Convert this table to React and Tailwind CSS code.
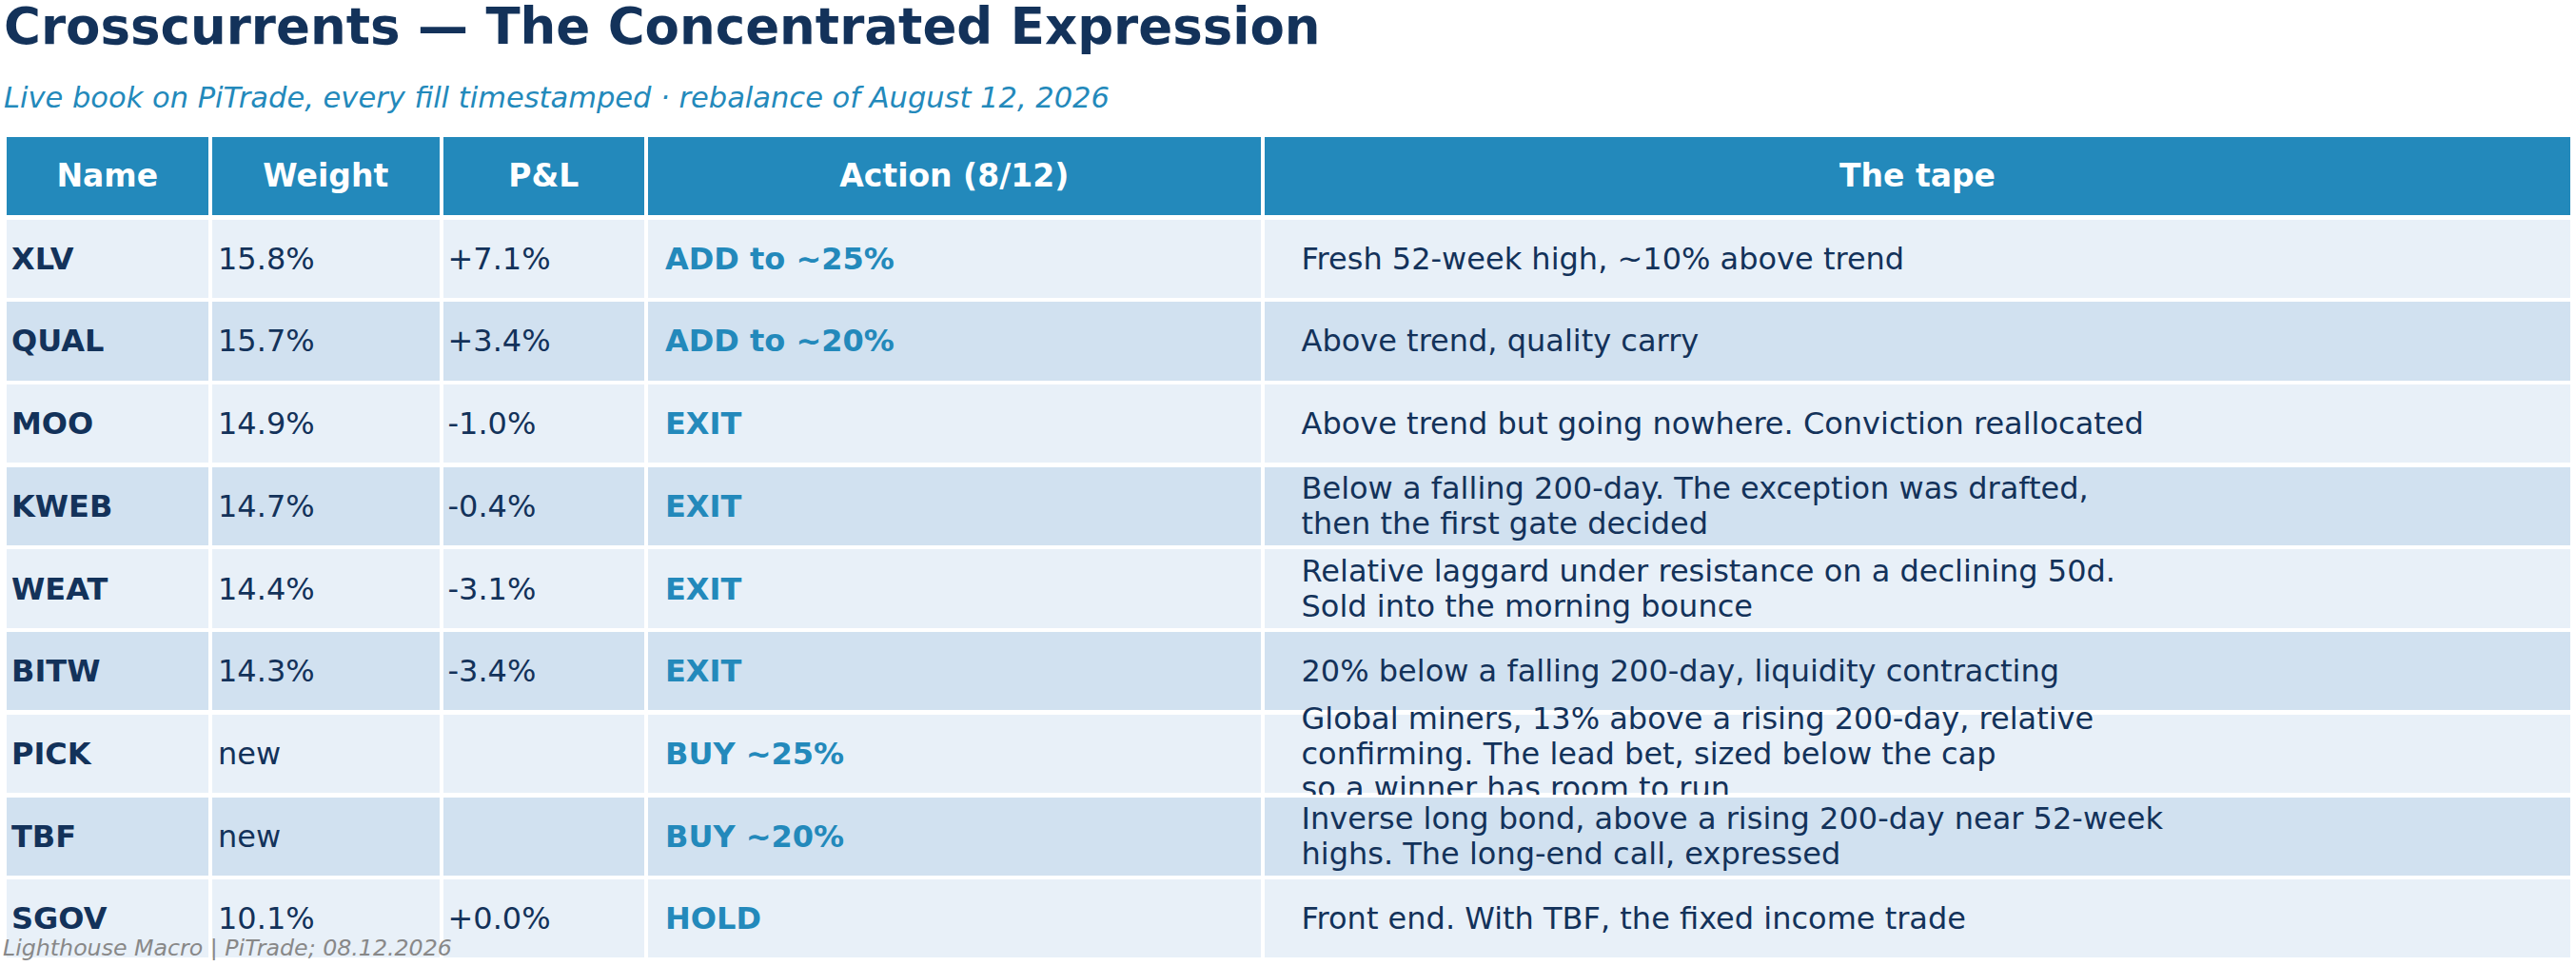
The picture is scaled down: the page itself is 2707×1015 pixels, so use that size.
import React from "react";

const rows = [
  { name: "XLV", weight: "15.8%", pnl: "+7.1%", action: "ADD to ~25%", tape: ["Fresh 52-week high, ~10% above trend"] },
  { name: "QUAL", weight: "15.7%", pnl: "+3.4%", action: "ADD to ~20%", tape: ["Above trend, quality carry"] },
  { name: "MOO", weight: "14.9%", pnl: "-1.0%", action: "EXIT", tape: ["Above trend but going nowhere. Conviction reallocated"] },
  {
    name: "KWEB",
    weight: "14.7%",
    pnl: "-0.4%",
    action: "EXIT",
    tape: ["Below a falling 200-day. The exception was drafted,", "then the first gate decided"],
  },
  {
    name: "WEAT",
    weight: "14.4%",
    pnl: "-3.1%",
    action: "EXIT",
    tape: ["Relative laggard under resistance on a declining 50d.", "Sold into the morning bounce"],
  },
  { name: "BITW", weight: "14.3%", pnl: "-3.4%", action: "EXIT", tape: ["20% below a falling 200-day, liquidity contracting"] },
  {
    name: "PICK",
    weight: "new",
    pnl: "",
    action: "BUY ~25%",
    tape: [
      "Global miners, 13% above a rising 200-day, relative",
      "confirming. The lead bet, sized below the cap",
      "so a winner has room to run",
    ],
  },
  {
    name: "TBF",
    weight: "new",
    pnl: "",
    action: "BUY ~20%",
    tape: ["Inverse long bond, above a rising 200-day near 52-week", "highs. The long-end call, expressed"],
  },
  { name: "SGOV", weight: "10.1%", pnl: "+0.0%", action: "HOLD", tape: ["Front end. With TBF, the fixed income trade"] },
];

const headers = ["Name", "Weight", "P&L", "Action (8/12)", "The tape"];

// white frame around every cell, drawn by the cell itself so a later row covers spill-over text
const Cell = ({ fill, className, children }) => (
  <div className="relative h-[86.7px] bg-white p-[2.25px]">
    <div className={`flex h-full items-center ${fill} ${className}`}>{children}</div>
  </div>
);

export default function App() {
  return (
    <div className="relative h-[1015px] w-[2707px] overflow-hidden bg-white font-['DejaVu_Sans',sans-serif] text-[#13325a]">
      <div className="pl-[4px]">
        <h1 className="text-[53px] font-bold leading-[56px]">Crosscurrents — The Concentrated Expression</h1>
        <p className="mt-[31.5px] text-[30.5px] italic leading-none text-[#2389bb]">
          Live book on PiTrade, every fill timestamped · rebalance of August 12, 2026
        </p>
      </div>

      <div className="ml-[4.75px] mt-[23.75px] grid grid-cols-[216px_243px_215px_648px_1376.5px]">
        {headers.map((h) => (
          <Cell key={h} fill="bg-[#2389bb]" className="justify-center text-[33px] font-bold text-white">
            {h}
          </Cell>
        ))}

        {rows.map((r, i) => {
          const fill = i % 2 === 0 ? "bg-[#e8f0f8]" : "bg-[#d1e1f0]";
          return (
            <React.Fragment key={r.name}>
              <Cell fill={fill} className="pl-[5px] text-[32px] font-bold">
                {r.name}
              </Cell>
              <Cell fill={fill} className="pl-[6px] text-[32px]">
                {r.weight}
              </Cell>
              <Cell fill={fill} className="pl-[4.5px] text-[32px]">
                {r.pnl}
              </Cell>
              <Cell fill={fill} className="pl-[18px] text-[32px] font-bold text-[#2389bb]">
                {r.action}
              </Cell>
              <Cell fill={fill} className="pl-[38.5px] text-[32px] leading-[36.5px]">
                <div className="whitespace-nowrap">
                  {r.tape.map((line) => (
                    <div key={line}>{line}</div>
                  ))}
                </div>
              </Cell>
            </React.Fragment>
          );
        })}
      </div>

      <div className="absolute left-[3px] top-[985px] text-[23.7px] italic leading-none text-[#888888]">
        Lighthouse Macro | PiTrade; 08.12.2026
      </div>
    </div>
  );
}
